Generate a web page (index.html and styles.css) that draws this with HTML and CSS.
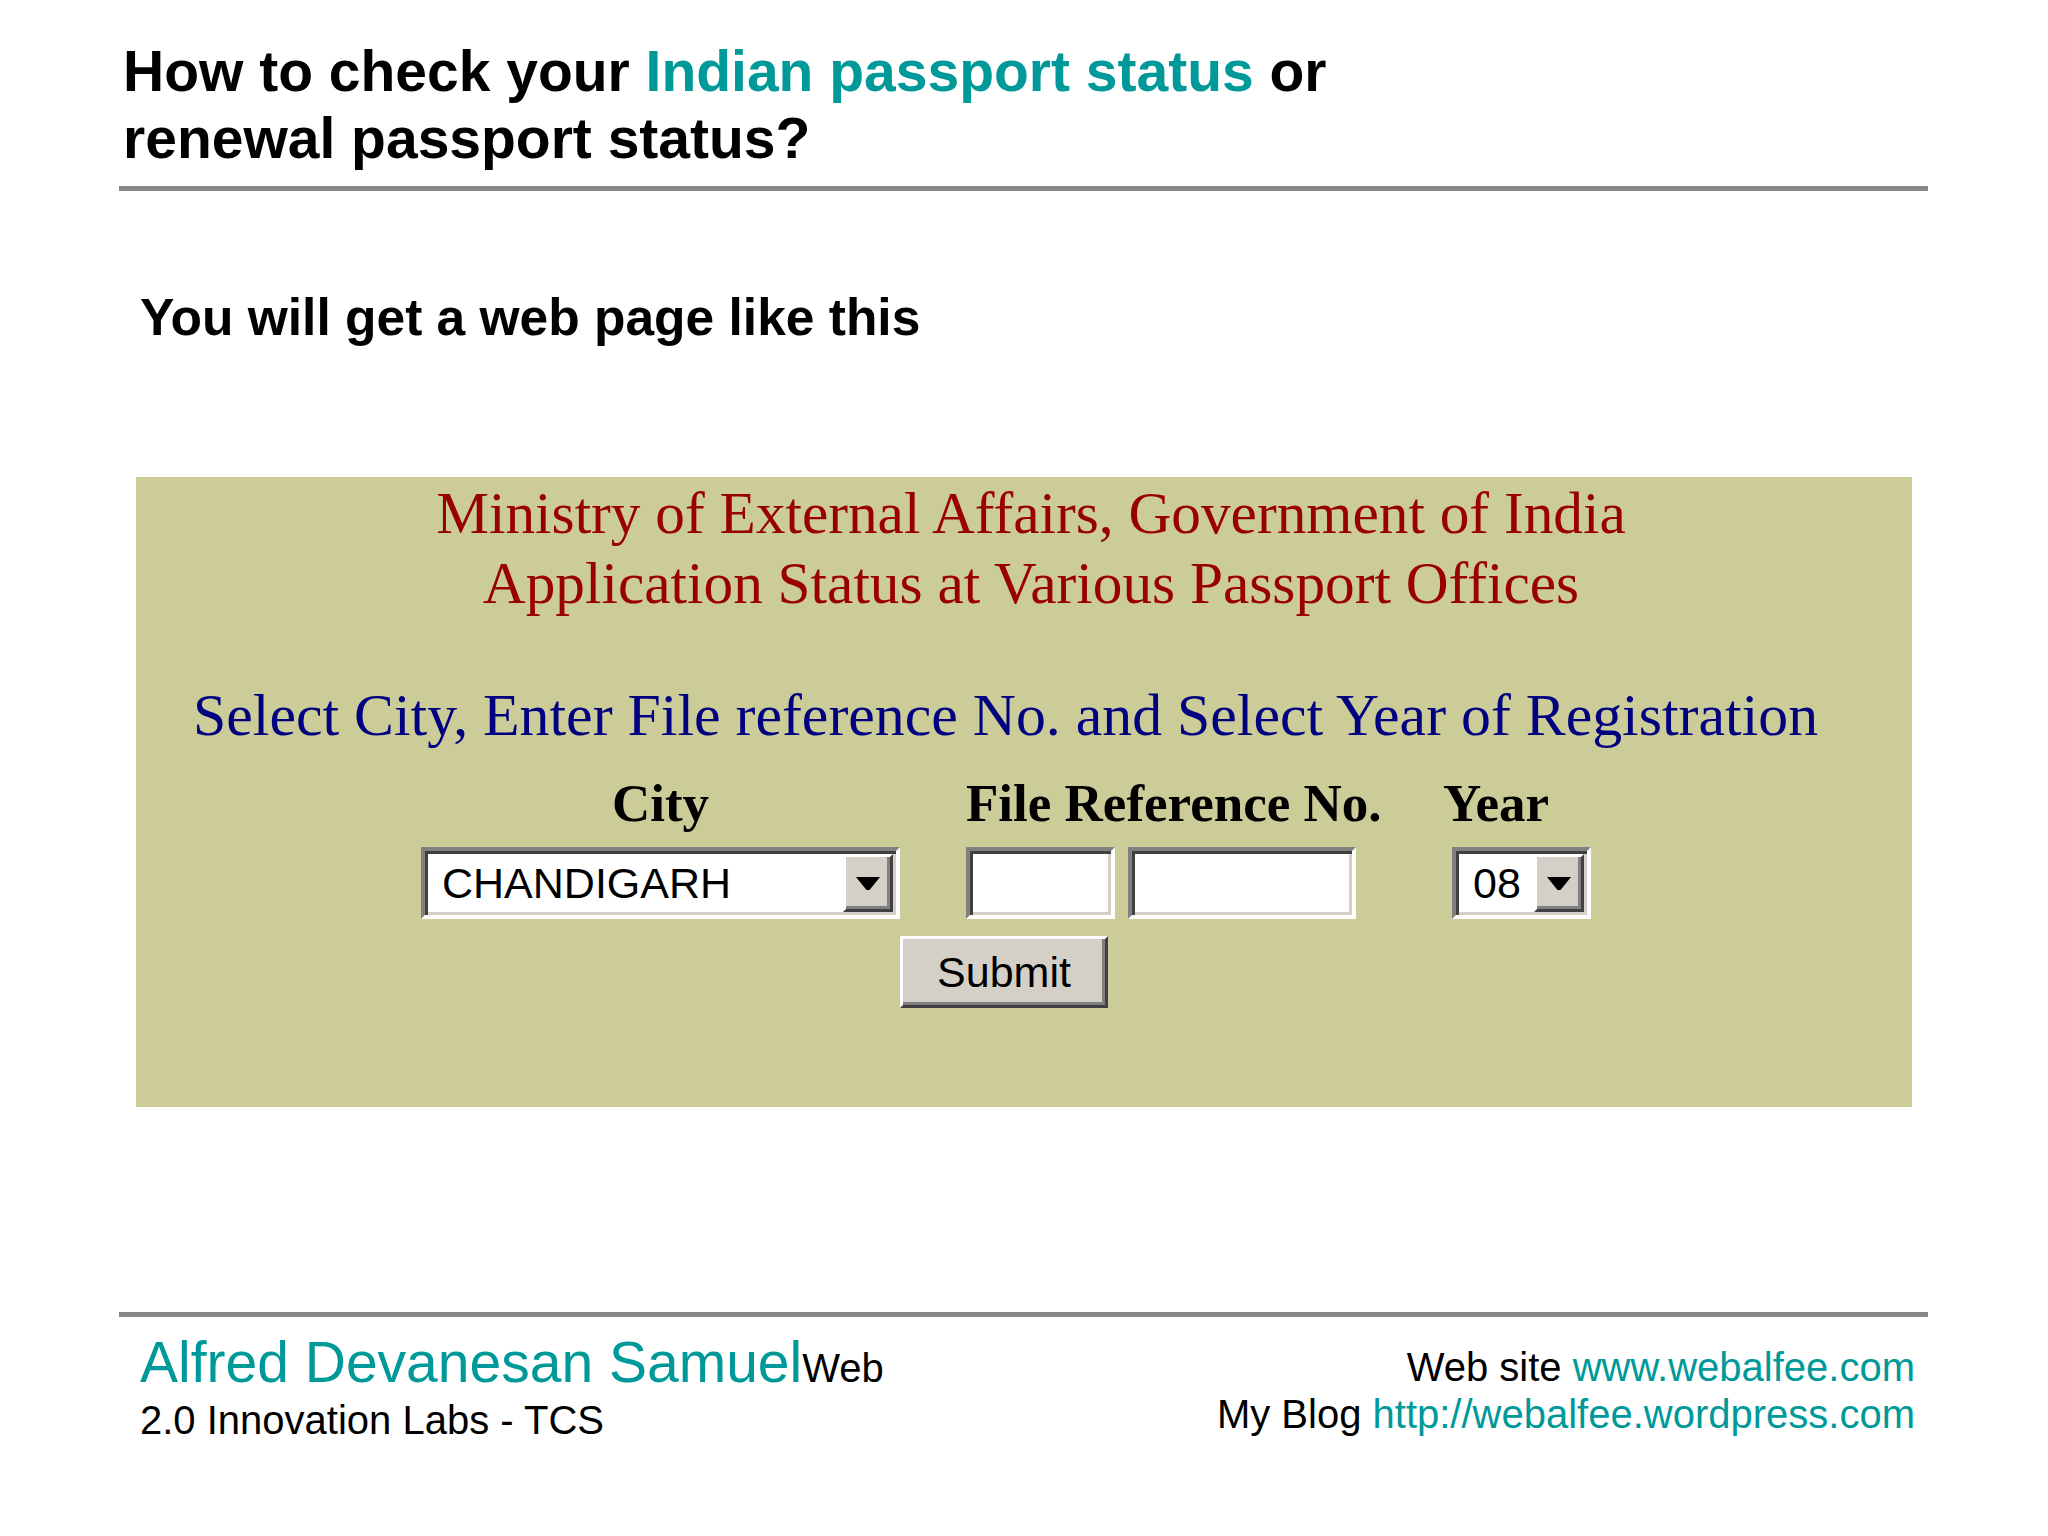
FILE: index.html
```html
<!DOCTYPE html>
<html lang="en">
<head>
  <meta charset="UTF-8">
  <title>How to check your Indian passport status</title>
  <link rel="stylesheet" href="styles.css">
</head>
<body>
  <div class="slide">
    <h1 class="title">How to check your <span class="hl">Indian passport status</span> or<br>renewal passport status?</h1>
    <div class="rule"></div>

    <p class="lead">You will get a web page like this</p>

    <div class="panel">
      <div class="ministry">
        Ministry of External Affairs, Government of India<br>
        Application Status at Various Passport Offices
      </div>
      <div class="instructions">Select City, Enter File reference No. and Select Year of Registration</div>

      <div class="form">
        <div class="fields">
          <div class="label col-city center">City</div>
          <div class="label col-file">File Reference No.</div>
          <div class="label col-year">Year</div>

          <div class="col-city">
            <div class="select city-select">
              <span class="value">CHANDIGARH</span>
              <span class="drop"><svg width="24" height="13" viewBox="0 0 24 13"><polygon points="0,0 24,0 13.5,13 10.5,13" fill="#000"/></svg></span>
            </div>
          </div>
          <div class="col-file file-inputs">
            <input type="text" class="text-input short">
            <input type="text" class="text-input long">
          </div>
          <div class="col-year">
            <div class="select year-select">
              <span class="value">08</span>
              <span class="drop"><svg width="24" height="13" viewBox="0 0 24 13"><polygon points="0,0 24,0 13.5,13 10.5,13" fill="#000"/></svg></span>
            </div>
          </div>
        </div>
        <div class="submit-row">
          <button class="submit">Submit</button>
        </div>
      </div>
    </div>

    <div class="rule footer-rule"></div>
    <div class="footer">
      <div class="author">
        <span class="name">Alfred Devanesan Samuel</span>Web<br>
        2.0 Innovation Labs - TCS
      </div>
      <div class="links">
        Web site <span class="hl">www.webalfee.com</span><br>
        My Blog <span class="hl">http://webalfee.wordpress.com</span>
      </div>
    </div>
  </div>
</body>
</html>
```

FILE: styles.css
```css
body {
  margin: 0;
  background: #fff;
  color: #000;
  font-family: "Liberation Sans", Arial, sans-serif;
}
.slide {
  width: 1809px;
  margin-left: 119px;
}
.hl {
  color: #009999;
}
.title {
  margin: 0 0 0 4px;
  padding-top: 38px;
  font-size: 57px;
  line-height: 67px;
  font-weight: bold;
}
.rule {
  height: 5px;
  margin-top: 14px;
  background: #868686;
}
.lead {
  margin: 97px 0 0 21px;
  font-size: 51.5px;
  line-height: 58px;
  font-weight: bold;
}

/* the passport office page */
.panel {
  width: 1776px;
  margin: 131px 0 0 17px;
  padding: 1px 0 99px;
  box-sizing: border-box;
  background: #cccc99;
  font-family: "Liberation Serif", "Times New Roman", serif;
}
.ministry {
  padding-left: 14px;
  color: #990000;
  font-size: 59.3px;
  line-height: 70px;
  text-align: center;
}
.instructions {
  margin-top: 62px;
  padding-left: 57px;
  color: #000080;
  font-size: 59.8px;
  line-height: 70px;
}
.form {
  width: 1170px;
  margin: 23px 0 0 285px;
}
.fields {
  display: grid;
  grid-template-columns: 479px 66px 420px 57px 148px;
  row-gap: 14px;
}
.col-city { grid-column: 1; }
.col-file { grid-column: 3; }
.col-year { grid-column: 5; }
.label {
  font-size: 53px;
  line-height: 60px;
  font-weight: bold;
}
.center {
  text-align: center;
}

.select,
.text-input {
  height: 72px;
  box-sizing: border-box;
  background: #fff;
  border: 4px solid;
  border-color: #808080 #fff #fff #808080;
  box-shadow: inset 3px 3px 0 #404040, inset -3px -3px 0 #d4d0c8;
}
.select {
  display: flex;
  align-items: center;
  padding: 3px;
  font-family: "Liberation Sans", Arial, sans-serif;
  font-size: 43px;
}
.select .value {
  flex: 1;
  padding-left: 14px;
}
.select .drop {
  width: 50px;
  align-self: stretch;
  box-sizing: border-box;
  display: flex;
  align-items: center;
  justify-content: center;
  background: #d4d0c8;
  border: 3px solid;
  border-color: #fff #404040 #404040 #fff;
  box-shadow: inset -3px -3px 0 #808080;
}
.city-select {
  width: 479px;
}
.year-select {
  width: 139px;
  margin-left: 9px;
}
.file-inputs {
  display: flex;
  gap: 13px;
}
.text-input {
  margin: 0;
  padding: 0;
  outline: none;
}
.text-input.short { width: 149px; }
.text-input.long { width: 228px; }

.submit-row {
  margin-top: 17px;
  padding-right: 4px;
  text-align: center;
  line-height: 0;
}
.submit {
  width: 208px;
  height: 72px;
  margin: 0;
  padding: 0;
  box-sizing: border-box;
  background: #d4d0c8;
  color: #000;
  border: 3px solid;
  border-color: #fff #404040 #404040 #fff;
  box-shadow: inset -3px -3px 0 #808080;
  font-family: "Liberation Sans", Arial, sans-serif;
  font-size: 43px;
  line-height: 1;
}

/* footer */
.footer-rule {
  margin-top: 205px;
}
.footer {
  display: flex;
  justify-content: space-between;
  align-items: flex-start;
  padding: 19px 13px 0 21px;
  font-size: 40px;
}
.author {
  line-height: 52px;
}
.author .name {
  color: #009999;
  font-size: 57px;
  line-height: 52px;
}
.links {
  margin-top: 8px;
  line-height: 47px;
  text-align: right;
}
```
